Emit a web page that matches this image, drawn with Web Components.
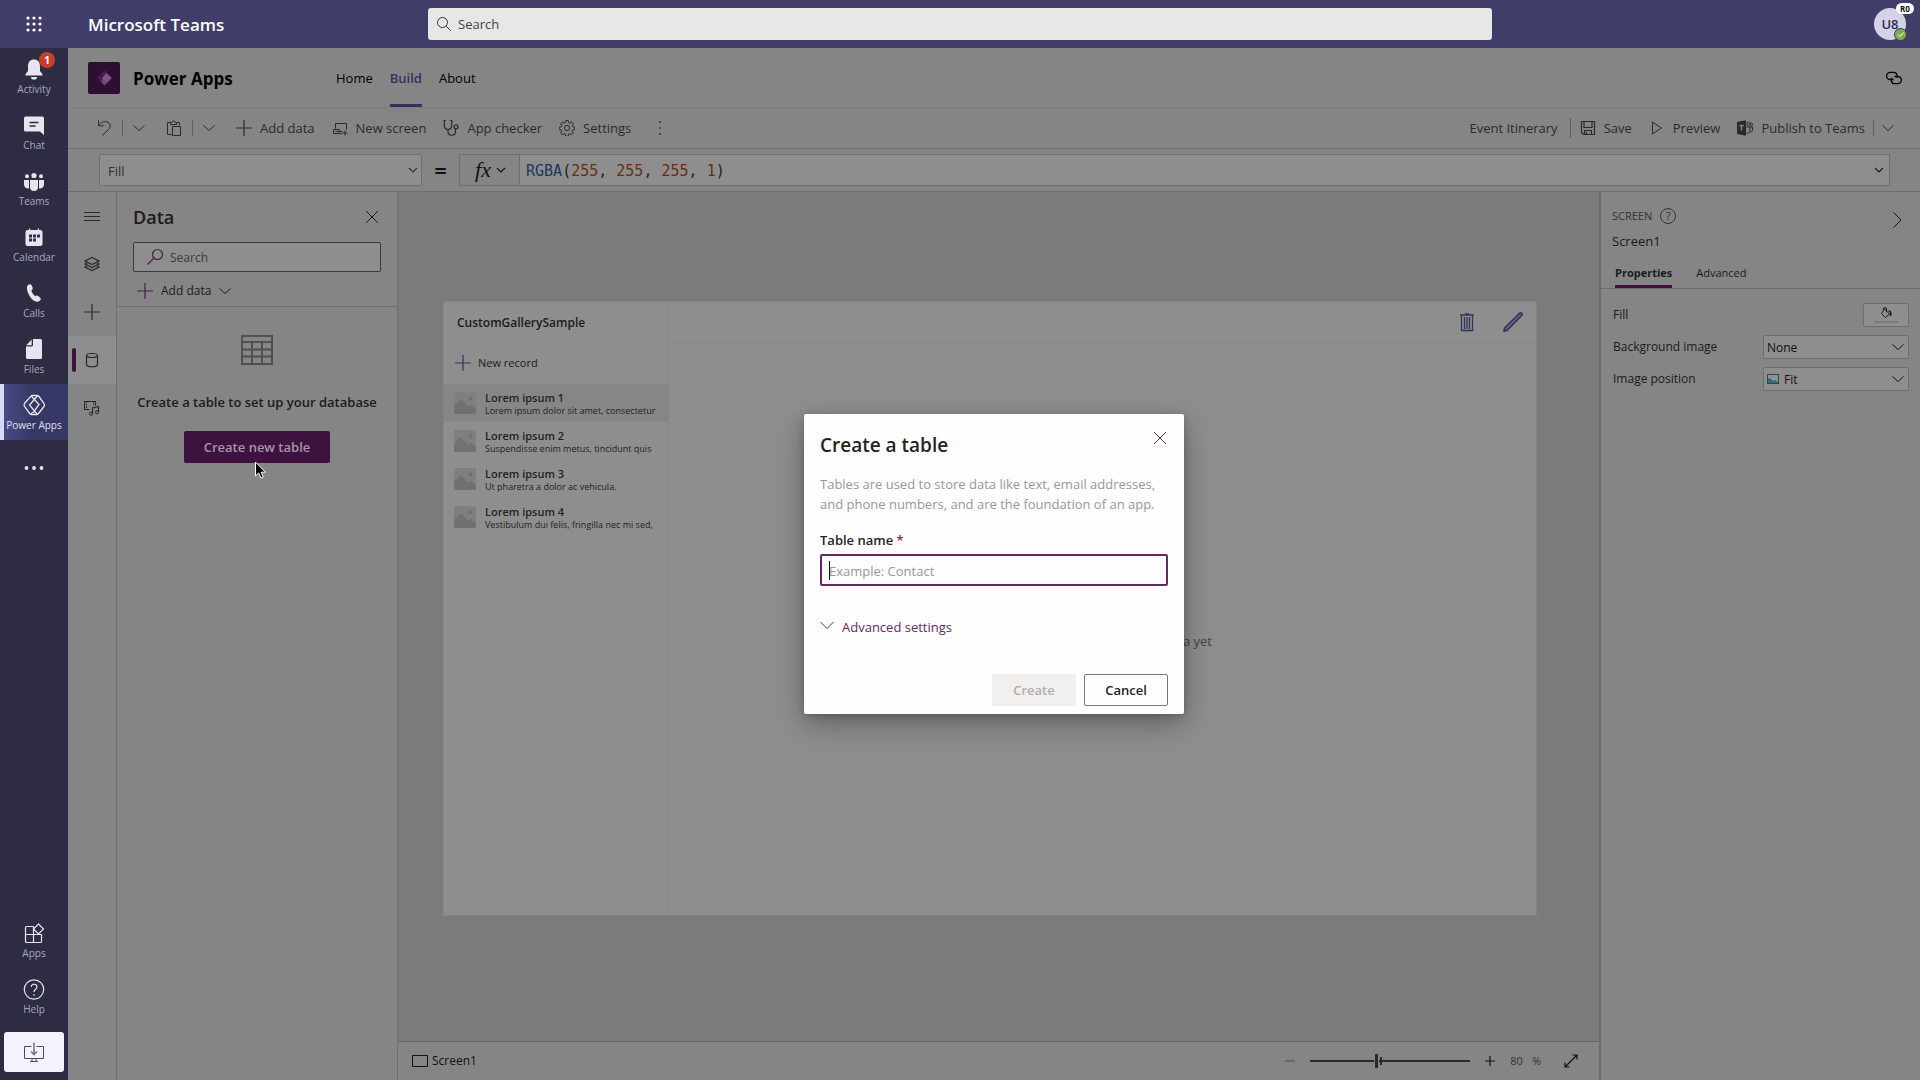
<!DOCTYPE html>
<html lang="en">
<head>
<meta charset="utf-8">
<title>Power Apps | Microsoft Teams</title>
<style>
html, body { height: 100%; margin: 0; }
body {
  font-family: "Open Sans", "Noto Sans", sans-serif;
  font-size: 13px; line-height: 20px; color: #1c1b1a; overflow: hidden;
  --panel: #858585; --field: #8e8e8e; --canvas: #7b7b7b; --line: #6f6f70;
  --ink: #1c1b1a; --dim: #2b2a29; --plum: #3e123f; --indigo: #32325f; --accent: #6a2468;
}
</style>
</head>
<body>
<teams-shell></teams-shell>
<script>
const S = (w, body, o = '') => `<svg viewBox="0 0 ${w} ${w}" width="${w}" height="${w}" fill="none" stroke="currentColor" stroke-width="1" ${o}>${body}</svg>`;
const ICONS = {
  waffle: S(16, [2, 8, 14].map(x => [2, 8, 14].map(y => `<circle cx="${x}" cy="${y}" r="1.6"/>`).join('')).join(''), 'style="fill:currentColor;stroke:none"'),
  search: S(16, '<circle cx="6.5" cy="6.5" r="5"/><path d="M10.2 10.2l4.6 4.6"/>'),
  searchLeft: S(18, '<circle cx="11.5" cy="6.5" r="5"/><path d="M8 10L1.5 16.5"/>', 'style="stroke-width:1.2"'),
  bell: S(24, '<path d="M12 2.5c-3.7 0-6 2.7-6 6.5v5L3.5 17.200V18.500h17v-1.300L18 14V9c0-3.800-2.300-6.500-6-6.500z"/><path d="M9 20h6a3 2.600 0 0 1-6 0z"/>', 'style="fill:currentColor;stroke:none"'),
  chat: S(24, '<path d="M3.500 3.500h17a1.500 1.500 0 0 1 1.500 1.500v17l-4-3.500H3.500A1.500 1.500 0 0 1 2 17V5a1.500 1.500 0 0 1 1.500-1.500z" fill="currentColor" stroke="none"/><path d="M7.500 9.500h9M7.500 13h6" stroke="#2d2c43" stroke-width="1.400"/>'),
  teams: S(24, '<circle cx="12" cy="6.500" r="2.600"/><circle cx="5" cy="7.300" r="2"/><circle cx="19" cy="7.300" r="2"/><path d="M8 11h8v7a4 4 0 0 1-8 0z"/><path d="M2 11h5v8.500c-3 .3-5-1.500-5-4zM22 11h-5v8.500c3 .3 5-1.500 5-4z"/>', 'style="fill:currentColor;stroke:none"'),
  calendar: S(24, '<path d="M5.500 5H7V3.500h1.200V5h7.600V3.500H17V5h1.500A2 2 0 0 1 20.500 7v12a2 2 0 0 1-2 2h-13a2 2 0 0 1-2-2V7a2 2 0 0 1 2-2z" fill="currentColor" stroke="none"/><path d="M7 9.500h3v3H7zM11 9.500h3v3h-3zM15 9.500h3v3h-3zM7 13.500h3v3H7zM11 13.500h3v3h-3z" fill="#2d2c43" stroke="none"/>'),
  phone: S(24, '<path d="M5.500 4.500C7 3 8.800 2.700 9.600 4.200l1 2.400c.4 1.200-.1 2.200-1.200 3 .4 2 2 4.300 3.700 5.500 1.200-.7 2.200-.8 3.100 0l2.200 2c1 1-.2 3.200-2.400 3.600-3 .6-6.300-1.700-8.700-6.100C5 10.500 4.300 6.500 5.500 4.500z"/>', 'style="fill:currentColor;stroke:none"'),
  file: S(24, '<path d="M11 2h7.500A1.500 1.500 0 0 1 20 3.500v17a1.500 1.500 0 0 1-1.500 1.500h-13A1.500 1.500 0 0 1 4 20.500V9.500h5.500A1.500 1.500 0 0 0 11 8z"/><path d="M9.700 2.600V8.200H4.200z"/>', 'style="fill:currentColor;stroke:none"'),
  powerapps: S(24, '<path d="M10.500 2.500h4.500q1.200 0 2 1l5 7q1 1.500 0 3l-5.500 7q-.8 1-2 1h-5q-1 0-1.800-1L2.500 13.500q-1-1.500 0-3L8.700 3.400q.8-.9 1.800-.9z"/><path d="M9.500 3.200l7.500 8.300-5.500 7.500q-1 1.500-2.500 1M15.500 2.800L7.500 12l7.500 9"/>', 'style="stroke-width:1.300"'),
  dots: S(24, '<circle cx="4.500" cy="12" r="1.900"/><circle cx="12" cy="12" r="1.900"/><circle cx="19.500" cy="12" r="1.900"/>', 'style="fill:currentColor;stroke:none"'),
  apps: S(24, '<path d="M11.500 5.500H4.500a1 1 0 0 0-1 1v14a1 1 0 0 0 1 1h14a1 1 0 0 0 1-1v-7H3.500M11.500 5.500v16M16.500 3l5 5-5 5-5-5z"/>', 'style="stroke-width:1.200"'),
  help: S(24, '<circle cx="12" cy="12.500" r="9.700"/><path d="M9.300 10c0-3.800 5.700-3.600 5.700 0 0 2.300-3 2.200-3 5M12 17v1.800"/>', 'style="stroke-width:1.200"'),
  install: S(24, '<path d="M9.500 6.500h-7v12h19v-12h-7M10 18.500v3M14 18.500v3M8 21.500h8" stroke="#4a4a58"/><path d="M12 2.500v12M9 11.500l3 3 3-3" stroke="#70788c" stroke-width="1.600"/>'),
  logo: S(32, '<rect width="32" height="32" rx="2" fill="#2d0f31"/><path d="M16 8.500L24 16l-7.500 7.500-4-4L16 16z" fill="#77427a"/><path d="M16.500 8.500L9 15.800l3.500 3.700L16 16l3.300-3.500z" fill="#4b1850"/><path d="M18.200 11l4.600 5-4.600 4.800L14 16.500z" fill="#8b4d8d"/>', 'style="stroke:none"'),
  link: S(18, '<path d="M8.500 10.500H5.200a3.600 3.600 0 0 1 0-7.200h3.600a3.600 3.600 0 0 1 3 5.500M9.500 7.500h3.300a3.600 3.600 0 0 1 0 7.200H9.700a3.600 3.600 0 0 1-3-5.500"/>', 'style="stroke-width:1.300"'),
  undo: S(16, '<path d="M2.500 .5v5.300h5.300M2.800 5.500C5 2.500 8 1 11 1.800c3.500 1 4 5 1.800 7.500L6 15.500"/>'),
  chev: S(12, '<path d="M.5 3.500l5.500 5 5.500-5"/>'),
  chevL: S(14, '<path d="M.500 3l6.500 6.500L13.500 3"/>'),
  chevS: S(12, '<path d="M2 4l4 4 4-4"/>', 'style="stroke-width:1.200"'),
  chevR: S(18, '<path d="M5.500 1.500L13 9l-7.500 7.500"/>'),
  paste: S(16, '<path d="M6 14.500H1.500v-12h3M10.500 2.500h3v3M4.500 4.500h6v-2H9a1.500 1.500 0 0 0-3 0H4.500zM6.500 6.500h8v9h-8z"/>'),
  plus: S(16, '<path d="M8 0v16M0 8h16"/>', 'style="stroke-width:1.200"'),
  plusS: S(10, '<path d="M5 0v10M0 5h10"/>', 'style="stroke-width:1.200"'),
  minus: S(10, '<path d="M0 5h10"/>', 'style="stroke-width:1.200"'),
  screen: S(16, '<path d="M3.500 8.500v-5h11v6M1.500 13.500v-4h6v2M1.500 13.500h8.500M3.500 11.500h7M13 10.500v5M10.500 13H15.500"/>'),
  steth: S(16, '<path d="M3 .500H1.200v4c0 3 1.500 5 3.800 5s3.800-2 3.800-5v-4H7M5 9.500v2c0 5 7.500 5 7.500 0V9"/><circle cx="13" cy="6.800" r="2"/>', 'style="stroke-width:1.200"'),
  gear: S(16, '<path d="M6.800.6h2.400l.4 2 1.400.6 1.700-1.200 1.700 1.700-1.200 1.700.6 1.400 2 .4v2.400l-2 .4-.6 1.400 1.200 1.700-1.700 1.700-1.700-1.200-1.400.6-.4 2H6.800l-.4-2-1.400-.6-1.700 1.200-1.700-1.700 1.200-1.700-.6-1.400-2-.4V7.200l2-.4.6-1.400-1.200-1.700 1.700-1.700L5 3.200l1.400-.6z"/><circle cx="8" cy="8" r="2.600"/>'),
  more: S(16, '<circle cx="8" cy="2" r=".9"/><circle cx="8" cy="8" r=".9"/><circle cx="8" cy="14" r=".9"/>', 'style="fill:currentColor;stroke:none"'),
  save: S(16, '<path d="M1.500 1.500h13v13h-11l-2-2zM4 1.500v6h8v-6M4.500 14.500v-4h7v4M6.500 12v2.500"/>', 'style="stroke-width:1.200"'),
  play: S(16, '<path d="M3.500 2l9 6-9 6z"/>'),
  teamsLogo: S(16, '<path d="M0 2L9 .3v15.400L0 14z" fill="currentColor" stroke="none"/><path d="M2.300 5.500h4.500M4.500 5.500v5" stroke="#858585" stroke-width="1.400"/><circle cx="11.500" cy="3.800" r="1.700"/><circle cx="14.500" cy="4.500" r="1.200"/><path d="M9.500 7h3.500v4.500c0 1.500-2 2-3.500 1.500M13 7h2.500v3.500c0 1-1.200 1.500-2.200 1.200"/>'),
  menu: S(16, '<path d="M0 4.500h16M0 8.500h16M0 12.500h16"/>'),
  layers: S(16, '<path d="M8 1.500L15 5 8 8.500 1 5zM3 6.700L1 8l7 3.500L15 8l-2-1.300M3 9.700L1 11l7 3.500L15 11l-2-1.300"/>', 'style="stroke-width:1.200"'),
  db: S(16, '<path d="M2.500 3.500v9c0 3 11 3 11 0v-9"/><ellipse cx="8" cy="3.500" rx="5.500" ry="2"/>', 'style="stroke-width:1.200"'),
  media: S(16, '<path d="M5.500 9.500H.500v-8h11v4" stroke-width="1.200"/><path d="M2.500 1.500v8M9.500 1.500v3.500" stroke-dasharray="1.500 1"/><path d="M8.500 13.500V8l6-1.500V12" stroke-width="1.200"/><circle cx="7" cy="13.700" r="1.500"/><circle cx="13" cy="12.300" r="1.500"/>'),
  close: S(14, '<path d="M1 1l12 12M13 1L1 13"/>'),
  table: S(32, '<path d="M1 2h30v28H1zM1 8h30M1 15.500h30M1 22.500h30M11 8v22M21 8v22"/>', 'style="stroke-width:2"'),
  trash: S(20, '<path d="M3 3h14M8 2h4" stroke-width="1.600"/><path d="M4.500 4v14.500h11V4M7.500 5v12M10 5v12M12.500 5v12" stroke-width="1.300"/>'),
  pencil: S(20, '<path d="M1 19l.5-3L16.500 1.300a1.200 1.200 0 0 1 2.200 2.200L4 18.500z" fill="#62627a"/>', 'style="stroke-width:1.500"'),
  picture: S(22, '<rect width="22" height="22" rx="1.500" fill="#7f7f80"/><path d="M0 14l6.500-7 8 8 2-2.500L22 17v3.500a1.500 1.500 0 0 1-1.500 1.500h-19A1.500 1.500 0 0 1 0 20.500z" fill="#717172"/><circle cx="16.500" cy="6.500" r="2" fill="#717172"/>', 'style="stroke:none"'),
  fit: S(12, '<rect x=".5" y="1.500" width="11" height="9" fill="#8b9294" stroke="#34464b"/><path d="M1 5l3 1 2 2 2-1 3 2v1H1z" fill="#2f6c74" stroke="none"/>'),
  bucket: S(12, '<path d="M4.500 2L9.500 7 5.500 10.500 1.500 6.500zM3.500 4V2a1.500 1.500 0 0 1 3 0v3"/><path d="M8.500 4c2.500 0 2.500 2 2 5" stroke-width="1.600"/>'),
  rect: S(16, '<path d="M.5 2.500h15v11H.5z"/>'),
  expand: S(14, '<path d="M1 13L13 1M8.500 1H13v4.500M1 8.500V13h4.500"/>', 'style="stroke-width:1.200"'),
  cursor: S(18, '<path d="M1.500 1v14l3.200-3 2.300 5 2.300-1-2.200-4.800h4.400z" fill="#000" stroke="#fff"/>')
};

function define(name, render) {
  customElements.define(name, class extends HTMLElement {
    connectedCallback() {
      if (this.shadowRoot) return;
      const t = document.createElement('template');
      t.innerHTML = `<style>
        *, *::before { box-sizing: border-box; }
        :host { display: block; }
        svg { display: block; }
        button, input, select { font: inherit; color: inherit; margin: 0; padding: 0; border: 0; background: none; border-radius: 0; outline: none; }
        a { color: inherit; text-decoration: none; }
        h1, h2, h3, p { margin: 0; font: inherit; }
        </style>` + render(k => this.getAttribute(k) || '');
      this.attachShadow({ mode: 'open' }).append(t.content);
    }
  });
}

define('ui-icon', a => `<style>:host { display: block; flex: none; }</style>${ICONS[a('name')]}`);

define('top-bar', () => `<style>
  :host { display: grid; grid-template-columns: 1fr minmax(320px, 1064px) 1fr; align-items: center; height: 48px; background: #403e68; color: #fff; }
  .brand { display: flex; align-items: center; gap: 46px; padding-left: 26px; }
  h1 { padding-top: 2px; font-size: 17px; line-height: 24px; font-weight: 600; }
  label { display: flex; align-items: center; gap: 6px; height: 32px; padding: 0 8px; border-radius: 3px; background: #e8e7e7; color: #33323a; }
  input { flex: 1; font-size: 13px; } input::placeholder { color: #44434a; opacity: 1; }
  .me { justify-self: end; position: relative; width: 32px; height: 32px; margin-right: 14px; border-radius: 50%; background: #d4d2e8; color: #2d2c4d; font-size: 13px; text-align: center; line-height: 32px; font-weight: 600; }
  .tag { position: absolute; right: -8px; top: -5px; width: 18px; height: 11px; border-radius: 6px; background: #fff; color: #111; font-size: 8px; line-height: 11px; font-weight: 700; }
  .on { position: absolute; right: 0; bottom: 0; width: 11px; height: 11px; border-radius: 50%; background: #78b043; box-shadow: 0 0 0 1px #403e68; }
  </style>
  <div class="brand"><ui-icon name="waffle"></ui-icon><h1>Microsoft Teams</h1></div>
  <label><ui-icon name="search"></ui-icon><input type="search" placeholder="Search" aria-label="Search Teams"></label>
  <div class="me">U8<span class="tag">R0</span><span class="on"><svg viewBox="0 0 11 11" fill="none" stroke="#fff"><path d="M3 5.500l2 2 3.500-4"/></svg></span></div>`);

define('rail-item', a => `<style>
  button { position: relative; display: flex; flex-direction: column; align-items: center; width: 100%; height: 56px; padding-top: 9px; color: #e6e5ee; font-size: 10px; line-height: 16px; }
  .t { color: #a9a8bb; }
  :host([active]) button { background: linear-gradient(90deg, #4a4a86, #373765 45%); border-left: 4px solid #d9d9f5; padding-right: 4px; }
  :host([active]) .t { color: #e0e0f0; white-space: nowrap; }
  :host([bare]) button { padding-top: 16px; }
  b { position: absolute; left: 39px; top: 4px; width: 16px; height: 16px; border-radius: 50%; background: #c4402c; color: #fff; font-size: 10px; }
  </style><button aria-label="${a('label') || 'More apps'}"><ui-icon name="${a('icon')}"></ui-icon>${a('label') ? `<span class="t">${a('label')}</span>` : ''}${a('count') ? `<b>${a('count')}</b>` : ''}</button>`);

define('app-rail', () => `<style>
  :host { display: flex; flex-direction: column; width: 68px; background: #2d2c43; }
  .gap { flex: 1; }
  .install { display: grid; place-items: center; height: 40px; margin: 8px 4px; border-radius: 3px; background: #f3f2fd; }
  </style>
  <rail-item icon="bell" label="Activity" count="1"></rail-item><rail-item icon="chat" label="Chat"></rail-item>
  <rail-item icon="teams" label="Teams"></rail-item><rail-item icon="calendar" label="Calendar"></rail-item>
  <rail-item icon="phone" label="Calls"></rail-item><rail-item icon="file" label="Files"></rail-item>
  <rail-item icon="powerapps" label="Power Apps" active></rail-item><rail-item icon="dots" bare></rail-item>
  <span class="gap"></span>
  <rail-item icon="apps" label="Apps"></rail-item><rail-item icon="help" label="Help"></rail-item>
  <button class="install" aria-label="Download the desktop app"><ui-icon name="install"></ui-icon></button>`);

define('app-header', () => `<style>
  :host { display: flex; align-items: center; height: 60px; padding: 0 17px 0 20px; background: var(--panel); border-bottom: 1px solid #7c7c7c; color: #000; }
  h2 { width: 216px; padding: 2px 0 0 13px; font-size: 17px; line-height: 24px; font-weight: 700; }
  nav { display: flex; gap: 17px; height: 100%; }
  a { display: flex; align-items: center; padding-top: 4px; border-bottom: 3px solid transparent; }
  a.on { color: var(--indigo); border-color: var(--indigo); font-weight: 600; }
  ui-icon.end { margin-left: auto; }
  </style>
  <ui-icon name="logo"></ui-icon><h2>Power Apps</h2>
  <nav><a href="#home">Home</a><a href="#build" class="on" aria-current="page">Build</a><a href="#about">About</a></nav>
  <ui-icon class="end" name="link"></ui-icon>`);

define('cmd-button', a => `<style>
  button { display: flex; align-items: center; gap: 8px; height: 32px; white-space: nowrap; color: var(--dim); }
  </style><button aria-label="${a('label')}"><ui-icon name="${a('icon')}"></ui-icon><slot></slot></button>`);

define('cmd-split', a => `<style>
  :host { display: flex; align-items: center; gap: 10px; padding-right: 4px; color: var(--dim); }
  i { width: 1px; height: 16px; background: #5f5f5f; }
  </style><slot></slot><i></i><button aria-label="More ${a('label')} options"><ui-icon name="chev"></ui-icon></button>`);

define('command-bar', () => `<style>
  :host { display: flex; align-items: center; gap: 17px; height: 41px; padding: 0 26px 0 28px; background: var(--panel); border-bottom: 1px solid var(--line); color: var(--dim); white-space: nowrap; }
  .gap { flex: 1; }
  .app { padding-right: 12px; border-right: 1px solid #5f5f5f; }
  cmd-split:last-child { padding: 0; gap: 8px; }
  .more { margin-left: 4px; }
  .save { margin-left: -8px; }
  </style>
  <cmd-split label="undo"><cmd-button icon="undo" label="Undo"></cmd-button></cmd-split>
  <cmd-split label="paste"><cmd-button icon="paste" label="Paste"></cmd-button></cmd-split>
  <cmd-button icon="plus" label="Add data">Add data</cmd-button>
  <cmd-button icon="screen" label="New screen">New screen</cmd-button>
  <cmd-button icon="steth" label="App checker">App checker</cmd-button>
  <cmd-button icon="gear" label="Settings">Settings</cmd-button>
  <cmd-button class="more" icon="more" label="More"></cmd-button>
  <span class="gap"></span>
  <span class="app">Event Itinerary</span>
  <cmd-button class="save" icon="save" label="Save">Save</cmd-button>
  <cmd-button icon="play" label="Preview">Preview</cmd-button>
  <cmd-split label="publish"><cmd-button icon="teamsLogo" label="Publish to Teams">Publish to Teams</cmd-button></cmd-split>`);

define('drop-down', a => `<style>
  :host { display: grid; align-items: center; height: 24px; border: 1px solid var(--line); background: var(--field); border-radius: 2px; }
  :host > * { grid-area: 1 / 1; }
  select { appearance: none; width: 100%; height: 100%; padding: 1px 0 0 ${a('icon') ? '20px' : a('pad') || '3px'}; }
  .arrow { justify-self: end; margin-right: ${a('arrow') === 'chevS' ? 2 : 4}px; pointer-events: none; }
  .pic { justify-self: start; margin-left: 3px; pointer-events: none; }
  </style><select aria-label="${a('label')}"><option>${a('value')}</option></select>
  ${a('icon') ? `<ui-icon class="pic" name="${a('icon')}"></ui-icon>` : ''}<ui-icon class="arrow" name="${a('arrow') || 'chev'}"></ui-icon>`);

define('formula-bar', () => `<style>
  :host { display: flex; align-items: center; height: 43px; padding: 0 30px 0 31px; background: var(--panel); border-bottom: 1px solid var(--line); }
  drop-down { width: 323px; height: 32px; color: #333; }
  .eq { width: 37px; text-align: center; font-size: 22px; font-weight: 600; color: #111; }
  .box { flex: 1; display: flex; height: 32px; border: 1px solid var(--line); background: var(--field); }
  .fx { display: flex; align-items: center; justify-content: center; gap: 4px; width: 60px; padding-left: 3px; background: var(--panel); border-right: 1px solid var(--line); font: italic 22px/28px "Liberation Serif", serif; color: #111; }
  code { flex: 1; padding: 1px 0 0 6px; font: 15px/30px "DejaVu Sans Mono", monospace; color: #222; outline: none; }
  code b { font-weight: 400; color: #1d3760; } code i { font-style: normal; color: #663011; }
  .end { align-self: center; margin-right: 4px; }
  </style>
  <drop-down label="Property" value="Fill" pad="8px" arrow="chevS"></drop-down><span class="eq">=</span>
  <div class="box"><button class="fx" aria-label="Insert function"><span>fx</span><ui-icon name="chevS"></ui-icon></button>
  <code contenteditable="true" role="textbox" aria-label="Formula" spellcheck="false"><b>RGBA</b>(<i>255</i>, <i>255</i>, <i>255</i>, <i>1</i>)</code>
  <ui-icon class="end" name="chevS"></ui-icon></div>`);

define('tool-rail', () => `<style>
  :host { display: flex; flex-direction: column; width: 49px; background: var(--panel); border-right: 1px solid var(--line); }
  button { position: relative; display: grid; place-items: center; height: 48px; color: var(--dim); }
  .on { background: var(--field); }
  .on::before { content: ""; position: absolute; left: 4px; top: 12px; width: 4px; height: 24px; border-radius: 2px; background: var(--plum); }
  </style>` + [['menu', 'Menu'], ['layers', 'Tree view'], ['plus', 'Insert'], ['db', 'Data'], ['media', 'Media']].map(([i, l]) =>
    `<button aria-label="${l}"${i === 'db' ? ' class="on"' : ''}><ui-icon name="${i}"></ui-icon></button>`).join(''));

define('data-panel', () => `<style>
  :host { display: flex; flex-direction: column; width: 281px; background: var(--panel); border-right: 1px solid var(--line); }
  header { display: flex; align-items: center; justify-content: space-between; height: 50px; padding: 0 18px 0 16px; }
  h2 { font-size: 18px; line-height: 24px; font-weight: 600; }
  label { display: flex; align-items: center; gap: 6px; height: 30px; margin: 0 16px; padding-left: 12px; border: 1px solid #3c3b3a; border-radius: 2px; background: var(--field); color: #4a1d4b; }
  input { flex: 1; min-width: 0; padding-top: 1px; font-size: 12px; } input::placeholder { color: #3c3b3a; opacity: 1; }
  .add { display: flex; align-items: center; gap: 8px; height: 35px; padding: 3px 0 0 20px; border-bottom: 1px solid var(--line); font-size: 12px; }
  .add ui-icon:first-child { color: #4a1d4b; }
  .empty { display: flex; flex-direction: column; align-items: center; padding-top: 27px; }
  .empty ui-icon { color: #514f50; }
  h3 { padding: 26px 0 19px; font-weight: 600; white-space: nowrap; }
  .cta { position: relative; width: 146px; height: 32px; border-radius: 2px; background: var(--plum); color: #a596a5; font-size: 13px; font-weight: 600; }
  .ptr { position: absolute; left: 70px; top: 30px; }
  </style>
  <header><h2>Data</h2><button aria-label="Close"><ui-icon name="close"></ui-icon></button></header>
  <label><ui-icon name="searchLeft"></ui-icon><input type="search" placeholder="Search" aria-label="Search data"></label>
  <button class="add"><ui-icon name="plus"></ui-icon>Add data<ui-icon name="chev"></ui-icon></button>
  <div class="empty"><ui-icon name="table"></ui-icon><h3>Create a table to set up your database</h3>
  <button class="cta">Create new table<ui-icon class="ptr" name="cursor"></ui-icon></button></div>`);

define('gallery-row', () => `<style>
  :host { display: flex; align-items: center; gap: 9px; height: 38px; padding-left: 10px; white-space: nowrap; overflow: hidden; font-size: 9px; line-height: 13px; color: #232221; }
  :host([selected]) { background: #868686; }
  div { padding-top: 2px; }
  .name { display: block; font-size: 11px; line-height: 13px; font-weight: 600; }
  </style><ui-icon name="picture"></ui-icon><div><span class="name"><slot name="name"></slot></span><slot></slot></div>`);

define('app-screen', () => `<style>
  :host { display: flex; background: var(--field); border: 1px solid #848484; }
  .list { width: 225px; padding-top: 11px; border-right: 1px solid #868686; }
  h3 { padding-left: 13px; font-size: 12px; font-weight: 600; }
  .new { display: flex; align-items: center; gap: 7px; height: 51px; padding: 8px 0 0 11px; font-size: 11px; }
  .new ui-icon { color: var(--indigo); }
  .form { flex: 1; display: flex; flex-direction: column; }
  .bar { display: flex; justify-content: flex-end; align-items: center; gap: 26px; height: 41px; padding-right: 13px; border-bottom: 1px solid #868686; color: var(--indigo); }
  p { flex: 1; display: grid; place-items: center; padding-top: 24px; color: #444; }
  </style>
  <div class="list"><h3>CustomGallerySample</h3><button class="new"><ui-icon name="plus"></ui-icon>New record</button>
  <gallery-row selected><span slot="name">Lorem ipsum 1</span>Lorem ipsum dolor sit amet, consectetur</gallery-row>
  <gallery-row><span slot="name">Lorem ipsum 2</span>Suspendisse enim metus, tincidunt quis</gallery-row>
  <gallery-row><span slot="name">Lorem ipsum 3</span>Ut pharetra a dolor ac vehicula.</gallery-row>
  <gallery-row><span slot="name">Lorem ipsum 4</span>Vestibulum dui felis, fringilla nec mi sed,</gallery-row></div>
  <div class="form"><div class="bar"><button aria-label="Delete"><ui-icon name="trash"></ui-icon></button><button aria-label="Edit"><ui-icon name="pencil"></ui-icon></button></div>
  <p>This form isn't linked to any data yet</p></div>`);

define('design-canvas', () => `<style>
  :host { flex: 1; display: flex; flex-direction: column; min-width: 0; background: var(--canvas); }
  .stage { flex: 1; display: flex; align-items: center; padding: 0 62px 16px 45px; }
  app-screen { flex: 1; aspect-ratio: 1094 / 615; }
  footer { display: flex; align-items: center; height: 39px; padding: 0 21px 0 14px; background: var(--panel); border-top: 1px solid #676767; font-size: 12px; color: #111; }
  footer > span { margin-left: 4px; } .gap { flex: 1; }
  input { appearance: none; width: 160px; height: 16px; margin: 0 15px; background: linear-gradient(#2a2a2a, #2a2a2a) 70px 50% / 2px 8px no-repeat, linear-gradient(#2a2a2a, #2a2a2a) center / 100% 2px no-repeat; }
  input::-webkit-slider-thumb { appearance: none; width: 5px; height: 14px; background: #2a2a2a; border: 1px solid #858585; border-width: 0 1px; }
  output { display: flex; gap: 9px; margin: 0 23px 0 15px; font-size: 11px; color: #333; }
  .dim { color: #555; }
  </style>
  <div class="stage"><app-screen></app-screen></div>
  <footer><ui-icon name="rect"></ui-icon><span>Screen1</span><i class="gap"></i>
  <button class="dim" aria-label="Zoom out"><ui-icon name="minus"></ui-icon></button><input type="range" aria-label="Zoom" min="10" max="180" value="80">
  <button aria-label="Zoom in"><ui-icon name="plusS"></ui-icon></button><output><span>80</span><span>%</span></output><button aria-label="Fit to window"><ui-icon name="expand"></ui-icon></button></footer>`);

define('property-row', a => `<style>
  :host { display: flex; align-items: center; justify-content: space-between; height: 32px; font-size: 12px; }
  </style><span>${a('label')}</span><slot></slot>`);

define('property-panel', () => `<style>
  :host { display: flex; flex-direction: column; width: 321px; background: var(--panel); border-left: 2px solid #6b6b6b; }
  header { display: flex; align-items: flex-start; justify-content: space-between; height: 62px; padding: 10px 14px 0 11px; }
  header button { margin-top: 9px; }
  .kind { display: flex; align-items: center; gap: 8px; height: 28px; font-size: 11px; color: #333; }
  .q { width: 16px; height: 16px; border: 1px solid #333; border-radius: 50%; text-align: center; font-size: 11px; font-style: normal; line-height: 14px; }
  .name { display: block; line-height: 22px; }
  nav { display: flex; gap: 24px; height: 35px; padding-left: 14px; border-bottom: 1px solid var(--line); font-size: 11px; }
  nav a { padding-top: 9px; height: 34px; border-bottom: 3px solid transparent; }
  nav .on { font-weight: 700; border-color: var(--plum); }
  .rows { padding: 10px 11px 0 12px; }
  drop-down { width: 146px; color: #111; font-size: 12px; }
  .fill { display: grid; place-content: center; justify-items: center; gap: 2px; width: 46px; height: 24px; border: 1px solid var(--line); border-radius: 2px; background: var(--field); }
  .fill i { width: 24px; height: 2px; background: #7d7d7d; }
  </style>
  <header><div><span class="kind">SCREEN<i class="q">?</i></span><span class="name">Screen1</span></div><button aria-label="Collapse"><ui-icon name="chevR"></ui-icon></button></header>
  <nav><a href="#properties" class="on">Properties</a><a href="#advanced">Advanced</a></nav>
  <div class="rows"><property-row label="Fill"><button class="fill" aria-label="Fill colour"><ui-icon name="bucket"></ui-icon><i></i></button></property-row>
  <property-row label="Background image"><drop-down label="Background image" value="None"></drop-down></property-row>
  <property-row label="Image position"><drop-down label="Image position" value="Fit" icon="fit"></drop-down></property-row></div>`);

define('table-dialog', () => `<style>
  :host { width: 380px; padding: 16px 16px 8px; border-radius: 2px; background: #fefefe; color: #252423; box-shadow: 0 10px 30px rgba(0,0,0,.3), 0 2px 8px rgba(0,0,0,.2); box-sizing: border-box; }
  header { display: flex; align-items: flex-start; justify-content: space-between; height: 44px; }
  header button { margin: 1px 1px 0 0; color: var(--accent); }
  h2 { font-size: 19px; line-height: 30px; font-weight: 600; }
  p { color: #98979a; white-space: nowrap; }
  .lbl { display: block; padding: 16px 0 4px; font-weight: 600; }
  .lbl span { color: #a4262c; }
  .field { display: grid; align-items: center; height: 32px; border: 2px solid var(--accent); border-radius: 2px; }
  .field > * { grid-area: 1 / 1; }
  input { width: 100%; height: 28px; padding: 1px 0 0 7px; caret-color: transparent; } input::placeholder { color: #98979a; opacity: 1; }
  .caret { width: 1px; height: 19px; margin-left: 7px; background: #111; }
  .adv { display: flex; align-items: center; gap: 8px; height: 20px; margin: 31px 0 37px; color: var(--accent); }
  .adv ui-icon { padding-bottom: 2px; }
  footer { display: flex; justify-content: flex-end; gap: 8px; }
  footer button { width: 84px; height: 32px; border-radius: 2px; font-weight: 600; }
  .no { background: #f1f0ef; color: #b0aeac; } .yes { border: 1px solid #777680; }
  </style>
  <header><h2>Create a table</h2><button aria-label="Close"><ui-icon name="close"></ui-icon></button></header>
  <p>Tables are used to store data like text, email addresses,<br>and phone numbers, and are the foundation of an app.</p>
  <label class="lbl" for="name">Table name <span>*</span></label>
  <div class="field"><input id="name" placeholder="Example: Contact"><i class="caret"></i></div>
  <button class="adv"><ui-icon name="chevL"></ui-icon>Advanced settings</button>
  <footer><button class="no" disabled>Create</button><button class="yes">Cancel</button></footer>`);

define('teams-shell', () => `<style>
  :host { display: flex; flex-direction: column; height: 100vh; }
  .body { flex: 1; display: flex; min-height: 0; }
  main { flex: 1; position: relative; display: flex; flex-direction: column; min-width: 0; }
  .work { flex: 1; display: flex; min-height: 0; }
  .over { position: absolute; inset: 0; display: grid; place-items: center; }
  </style>
  <top-bar></top-bar>
  <div class="body"><app-rail></app-rail>
  <main><app-header></app-header><command-bar></command-bar><formula-bar></formula-bar>
  <div class="work"><tool-rail></tool-rail><data-panel></data-panel><design-canvas></design-canvas><property-panel></property-panel></div>
  <div class="over"><table-dialog role="dialog" aria-modal="true" aria-label="Create a table"></table-dialog></div></main></div>`);
</script>
</body>
</html>
